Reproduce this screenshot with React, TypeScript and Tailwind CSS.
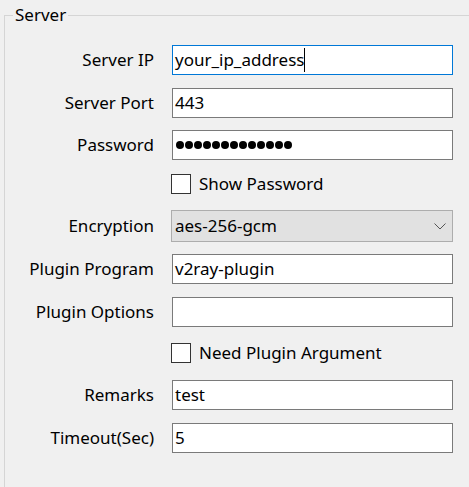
const font = { fontFamily: '"Noto Sans", "Open Sans", sans-serif' };

const Label = ({ children }: { children: React.ReactNode }) => (
  <div className="w-[149px] shrink-0 text-right">{children}</div>
);

const TextBox = ({
  value,
  focused,
  className = '',
}: {
  value?: React.ReactNode;
  focused?: boolean;
  className?: string;
}) => (
  <div
    className={`ml-[18px] flex h-[30px] w-[281px] items-center border bg-white pl-[2px] ${
      focused ? 'border-[#0078d7]' : 'border-[#7a7a7a]'
    } ${className}`}
  >
    {value}
  </div>
);

const CheckRow = ({ label, className = '' }: { label: string; className?: string }) => (
  <div className={`flex h-[20px] items-center ${className}`}>
    <div className="w-[149px] shrink-0" />
    <div className="ml-[17px] h-[20px] w-[20px] border border-[#333333] bg-white" />
    <span className="ml-[8px]">{label}</span>
  </div>
);

export default function App() {
  return (
    <div
      className="h-[487px] w-[469px] overflow-hidden bg-[#f0f0f0] pt-[4px] text-[17px] leading-[22px] text-black"
      style={font}
    >
      <fieldset className="ml-[4px] h-[520px] w-[480px] border-t border-l border-[#d5d5d5]">
        <legend className="ml-[8px] px-[2px]">Server</legend>

        <div className="mt-[19px] flex items-center">
          <Label>Server IP</Label>
          <TextBox
            focused
            value={
              <>
                <span>your_ip_address</span>
                <span className="h-[24px] w-px bg-black" />
              </>
            }
          />
        </div>

        <div className="mt-[13px] flex items-center">
          <Label>Server Port</Label>
          <TextBox value="443" />
        </div>

        <div className="mt-[12px] flex items-center">
          <Label>Password</Label>
          <TextBox
            className="h-[29px]"
            value={
              <div className="flex gap-[1px] pl-[1px]">
                {Array.from({ length: 13 }).map((_, i) => (
                  <span key={i} className="h-[8px] w-[8px] rounded-full bg-black" />
                ))}
              </div>
            }
          />
        </div>

        <CheckRow label="Show Password" className="mt-[14px]" />

        <div className="mt-[16px] flex items-center">
          <Label>Encryption</Label>
          <div className="ml-[17px] flex h-[32px] w-[282px] items-center justify-between border border-[#adadad] bg-[#e1e1e1] pl-[3px] pr-[6px]">
            <span>aes-256-gcm</span>
            <svg width="12" height="7" viewBox="0 0 12 7" fill="none">
              <path d="M0.5 0.5 L6 6 L11.5 0.5" stroke="#555" strokeWidth="1" />
            </svg>
          </div>
        </div>

        <div className="mt-[12px] flex items-center">
          <Label>Plugin Program</Label>
          <TextBox value="v2ray-plugin" />
        </div>

        <div className="mt-[13px] flex items-center">
          <Label>Plugin Options</Label>
          <TextBox />
        </div>

        <CheckRow label="Need Plugin Argument" className="mt-[16px]" />

        <div className="mt-[17px] flex items-center">
          <Label>Remarks</Label>
          <TextBox value="test" />
        </div>

        <div className="mt-[13px] flex items-center">
          <Label>Timeout(Sec)</Label>
          <TextBox value="5" />
        </div>
      </fieldset>
    </div>
  );
}
